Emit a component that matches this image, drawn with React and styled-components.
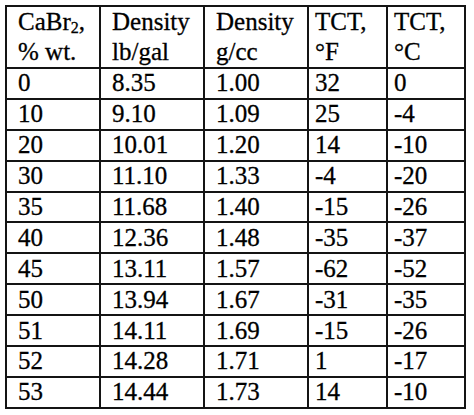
import styled, { createGlobalStyle } from 'styled-components'

const GlobalStyle = createGlobalStyle`
  html, body {
    margin: 0;
    padding: 0;
    background: #fff;
  }
`

const columns = [
  { key: 'pct', width: 94, pad: 12 },
  { key: 'lb', width: 104, pad: 12 },
  { key: 'gcc', width: 104, pad: 12 },
  { key: 'tf', width: 79, pad: 7 },
  { key: 'tc', width: 78, pad: 7 }
]

const rows = [
  ['0', '8.35', '1.00', '32', '0'],
  ['10', '9.10', '1.09', '25', '-4'],
  ['20', '10.01', '1.20', '14', '-10'],
  ['30', '11.10', '1.33', '-4', '-20'],
  ['35', '11.68', '1.40', '-15', '-26'],
  ['40', '12.36', '1.48', '-35', '-37'],
  ['45', '13.11', '1.57', '-62', '-52'],
  ['50', '13.94', '1.67', '-31', '-35'],
  ['51', '14.11', '1.69', '-15', '-26'],
  ['52', '14.28', '1.71', '1', '-17'],
  ['53', '14.44', '1.73', '14', '-10']
]

const App = () => {
  return (
    <Page>
      <GlobalStyle />
      <Table>
        <colgroup>
          {columns.map((c) => (
            <col key={c.key} style={{ width: c.width }} />
          ))}
        </colgroup>
        <thead>
          <HeadRow>
            <HeadCell $pad={12}>
              CaBr<Sub>2</Sub>,<br />% wt.
            </HeadCell>
            <HeadCell $pad={12}>
              Density<br />lb/gal
            </HeadCell>
            <HeadCell $pad={12}>
              Density<br />g/cc
            </HeadCell>
            <HeadCell $pad={7}>
              TCT,<br />°F
            </HeadCell>
            <HeadCell $pad={7}>
              TCT,<br />°C
            </HeadCell>
          </HeadRow>
        </thead>
        <tbody>
          {rows.map((r, i) => (
            <BodyRow key={i}>
              {r.map((v, j) => (
                <Cell key={j} $pad={columns[j].pad}>
                  {v}
                </Cell>
              ))}
            </BodyRow>
          ))}
        </tbody>
      </Table>
    </Page>
  )
}

const Page = styled.div`
  width: 474px;
  height: 415px;
  padding: 5px 0 0 5px;
  box-sizing: border-box;
  background: #fff;
`

const Table = styled.table`
  border-collapse: collapse;
  table-layout: fixed;
  width: 461px;
  color: #000;
`

const HeadRow = styled.tr`
  height: 61px;
`

const BodyRow = styled.tr`
  height: 30.9px;
`

const Cell = styled.td`
  border: 2px solid #141414;
  padding: 0 0 0 ${(p) => p.$pad - 1}px;
  line-height: 26px;
  vertical-align: middle;
  white-space: nowrap;
  overflow: hidden;
  font-family: 'Liberation Serif', serif;
  font-size: 25px;
  -webkit-text-stroke: 0.3px #000;
`

const HeadCell = styled(Cell).attrs({ as: 'th' })`
  font-weight: normal;
  text-align: left;
  vertical-align: top;
  line-height: 30px;
  padding-top: 0;
`

const Sub = styled.sub`
  font-size: 16px;
  line-height: 0;
  vertical-align: -3px;
`

export default App
